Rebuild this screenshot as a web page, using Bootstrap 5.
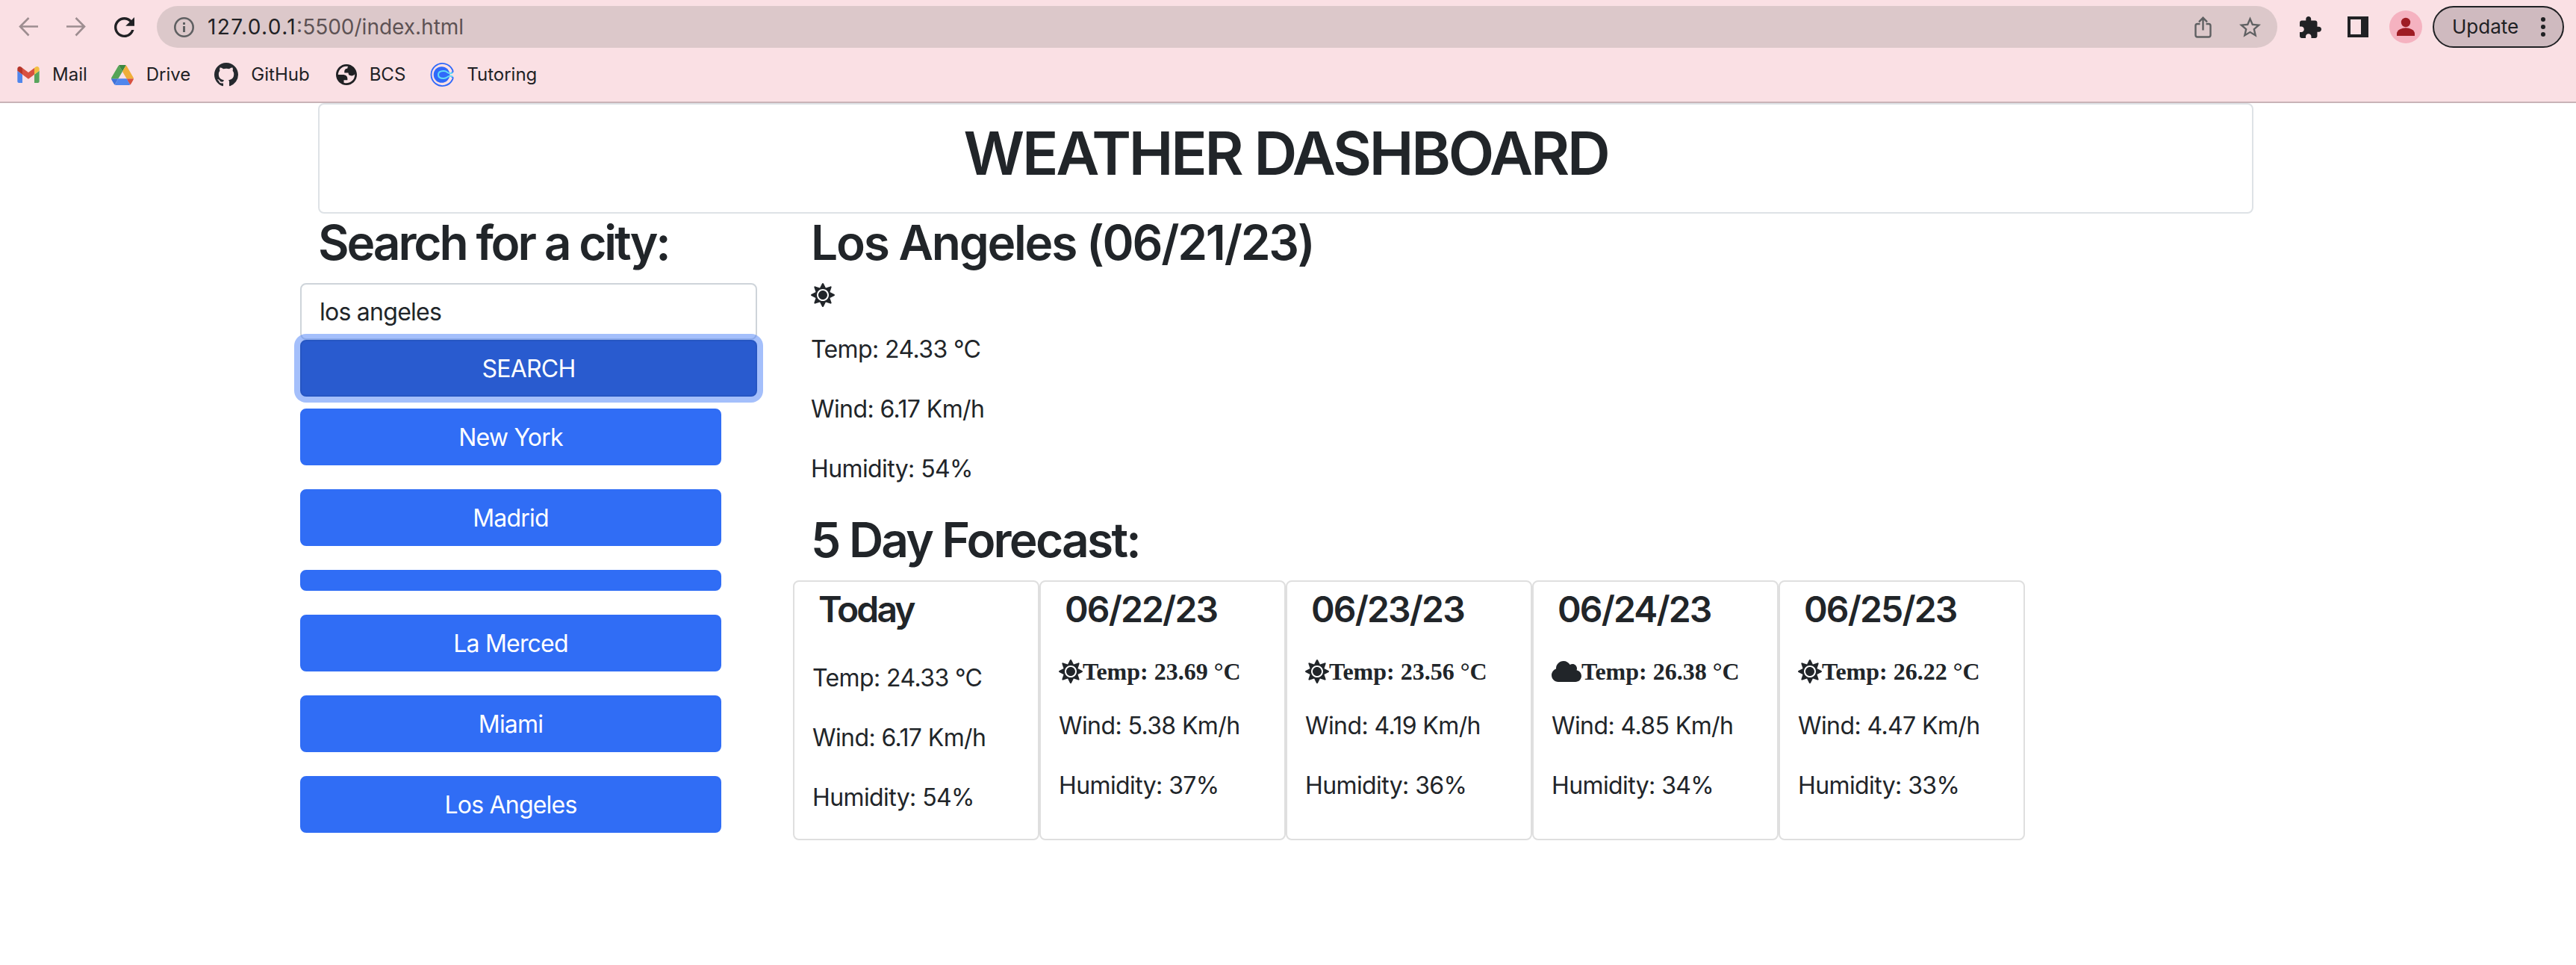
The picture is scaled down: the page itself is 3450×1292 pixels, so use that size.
<!DOCTYPE html>
<html lang="en">
<head>
<meta charset="utf-8">
<meta name="viewport" content="width=device-width, initial-scale=1">
<title>Weather Dashboard</title>
<link href="https://cdn.jsdelivr.net/npm/bootstrap@5.3.0/dist/css/bootstrap.min.css" rel="stylesheet">
<style>
  :root { font-size: 32px; --bs-border-width: 2px; }
  body { font-family: Inter, "Liberation Sans", sans-serif; color: #212529; background: #fff; letter-spacing: -.6px; overflow: hidden; }
  svg { display: block; flex: none; }

  /* browser chrome */
  .chrome { height: 138px; background: #fae0e4; border-bottom: 2px solid #c9b3b7; color: #202124; letter-spacing: 0; }
  .toolbar { height: 72px; padding: 0 16px 0 25px; }
  .nav-arrows { gap: 38px; color: #9d8d90; margin-right: 30px; }
  .nav-arrows .reload { color: #202124; }
  .omnibox { height: 56px; border-radius: 28px; background: #dcc8ca; padding: 0 22px 0 23px; font-size: 28px; line-height: 56px; margin-right: 30px; color: #5f6062; }
  .omnibox .host { color: #202124; letter-spacing: 1.4px; margin-left: 18px; }
  .omnibox .path { color: #5d5254; letter-spacing: 0; }
  .omnibox .share { margin-right: 37px; }
  .ext { margin-right: 35px; }
  .panel { margin-right: 28px; }
  .avatar { margin-right: 14px; }
  .update-pill { width: 176px; height: 56px; border: 2px solid #202124; border-radius: 28px; background: #cfbabf; font-size: 26px; line-height: 52px; padding: 0 23px 0 24px; }
  .bookmarks { height: 56px; padding-left: 23px; font-size: 24px; line-height: 56px; }
  .bookmarks a { color: inherit; text-decoration: none; gap: 17px; }
  .bk-mail, .bk-drive { margin-right: 32px; }
  .bk-git { margin-right: 35px; }
  .bk-bcs { margin-right: 33px; }

  /* dashboard */
  .container.dash { max-width: 2640px; margin-left: 402px; }
  .title-card { height: 148px; border: 2px solid #dee2e6; border-radius: 8px; }
  h1, h2, h4 { font-weight: 560 !important; }
  .title-card h1 { font-size: 80px; letter-spacing: -3.2px; line-height: 98px; }
  h2 { font-size: 64px !important; line-height: 78.800px !important; margin-bottom: 14px !important; white-space: nowrap; }
  .ls-search { letter-spacing: -3.15px; }
  .ls-city { letter-spacing: -2.25px; }
  .ls-forecast { letter-spacing: -2.75px; }
  .search-form { width: 612px; margin-left: -24px; }
  .search-form .form-control { border: 2px solid #ced4da; border-radius: 8px; letter-spacing: -.74px; padding-top: 13px; padding-bottom: 11px; }
  .btn { --bs-btn-border-width: 2px; --bs-btn-border-radius: 8px; --bs-btn-bg: #306df5; --bs-btn-border-color: #306df5; letter-spacing: -.8px; padding-top: 13px; padding-bottom: 11px; }
  .btn.search-btn { background: #295bcf; border-color: #2656c3; box-shadow: 0 0 0 8px rgba(73,127,247,.5); position: relative; }
  .history { width: 564px; margin-left: -24px; }
  .now svg { margin-bottom: 33px; }
  .now p { margin-bottom: 32px; }
  .forecast { margin-left: -24px; }
  .day { width: 330px; height: 348px; border: 2px solid #dfdfdf; border-radius: 8px; padding: 8px 0 0 24px; white-space: nowrap; }
  .day h4 { font-size: 48px; line-height: 1.2; margin: 0 0 39px 8px; letter-spacing: -1.85px; }
  .day h4.today { letter-spacing: -2.9px; margin-bottom: 40px; }
  .day p { margin-bottom: 32px; }
  .day .sky { height: 32px; margin-bottom: 33px; line-height: 34px; font-family: "Liberation Serif", "Times New Roman", serif; font-weight: 700; letter-spacing: 0; }
</style>
</head>
<body>
<svg width="0" height="0" class="position-absolute">
  <symbol id="sun" viewBox="0 0 512 512"><path d="M256 160c-52.900 0-96 43.100-96 96s43.100 96 96 96 96-43.100 96-96-43.100-96-96-96zm246.400 80.500l-94.700-47.300 33.500-100.400c4.500-13.600-8.400-26.500-21.900-21.900l-100.400 33.500-47.400-94.800c-6.400-12.800-24.600-12.800-31 0l-47.300 94.700L92.700 70.800c-13.600-4.500-26.500 8.400-21.900 21.900l33.500 100.400-94.700 47.400c-12.800 6.400-12.800 24.600 0 31l94.700 47.300-33.500 100.500c-4.500 13.600 8.400 26.500 21.900 21.900l100.400-33.500 47.300 94.700c6.400 12.800 24.600 12.800 31 0l47.300-94.700 100.400 33.500c13.600 4.500 26.500-8.400 21.900-21.900l-33.500-100.400 94.700-47.300c13-6.500 13-24.700.2-31.100zm-155.900 106c-49.900 49.900-131.100 49.900-181 0-49.900-49.900-49.900-131.100 0-181 49.900-49.900 131.100-49.900 181 0 49.900 49.900 49.900 131.100 0 181z"/></symbol>
  <symbol id="cloud" viewBox="0 0 640 512"><path d="M537.600 226.600c4.100-10.700 6.400-22.400 6.400-34.600 0-53-43-96-96-96-19.700 0-38.100 6-53.300 16.200C367 64.200 315.300 32 256 32c-88.400 0-160 71.600-160 160 0 2.700.1 5.400.2 8.100C40.200 219.800 0 273.200 0 336c0 79.500 64.500 144 144 144h368c70.700 0 128-57.300 128-128 0-61.900-44-113.600-102.400-125.400z"/></symbol>
</svg>

<header class="chrome">
  <div class="toolbar d-flex align-items-center">
    <div class="nav-arrows d-flex align-items-center">
      <svg width="26" height="26" viewBox="0 0 26 26" fill="none" stroke="currentColor" stroke-width="2.600"><path d="M26 12.500H2M13.500 1 2 12.500 13.500 24.500"/></svg>
      <svg width="26" height="26" viewBox="0 0 26 26" fill="none" stroke="currentColor" stroke-width="2.600"><path d="M0 12.500h24M12.500 1 24 12.500 12.500 24.500"/></svg>
      <svg class="reload" width="27" height="27" viewBox="4 4 16 16" fill="currentColor"><path d="M17.650 6.350C16.200 4.900 14.210 4 12 4c-4.420 0-7.990 3.580-7.990 8s3.570 8 7.990 8c3.730 0 6.840-2.550 7.730-6h-2.080c-.82 2.330-3.040 4-5.650 4-3.310 0-6-2.690-6-6s2.690-6 6-6c1.660 0 3.140.69 4.220 1.780L13 11h7V4l-2.350 2.350z"/></svg>
    </div>
    <div class="omnibox d-flex align-items-center flex-grow-1">
      <svg width="27" height="27" viewBox="0 0 27 27"><circle cx="13.500" cy="13.500" r="12.200" fill="none" stroke="currentColor" stroke-width="2.600"/><path fill="currentColor" d="M12 7h3v3h-3zM12 12h3v8h-3z"/></svg>
      <span class="host">127.0.0.1</span><span class="path">:5500/index.html</span>
      <svg class="share ms-auto" width="23" height="29" viewBox="0 0 23 29" fill="none" stroke="currentColor" stroke-width="2.400"><path d="M7.500 10H4a2.500 2.500 0 0 0-2.500 2.500v12.500A2.500 2.500 0 0 0 4 27.500h15a2.500 2.500 0 0 0 2.500-2.500V12.500A2.500 2.500 0 0 0 19 10h-3.500M11.500 18.500V2M6 7.300l5.500-5.500L17 7.300"/></svg>
      <svg width="29" height="28" viewBox="2 2 20 19" fill="currentColor"><path d="M22 9.240l-7.190-.62L12 2 9.190 8.630 2 9.240l5.460 4.730L5.820 21 12 17.270 18.180 21l-1.630-7.030L22 9.240zM12 15.400l-3.760 2.270 1-4.280-3.320-2.880 4.380-.38L12 6.100l1.710 4.040 4.380.38-3.320 2.880 1 4.280L12 15.400z"/></svg>
    </div>
    <svg class="ext" width="29" height="29" viewBox="2 1 21 21" fill="#202124"><path d="M20.500 11H19V7c0-1.100-.9-2-2-2h-4V3.500C13 2.120 11.880 1 10.500 1S8 2.120 8 3.500V5H4c-1.100 0-1.990.9-1.990 2v3.800H3.500c1.490 0 2.700 1.210 2.700 2.700s-1.210 2.700-2.700 2.700H2V20c0 1.100.9 2 2 2h3.800v-1.500c0-1.490 1.210-2.700 2.700-2.700 1.490 0 2.700 1.210 2.700 2.700V22H17c1.100 0 2-.9 2-2v-4h1.500c1.380 0 2.500-1.120 2.500-2.500S21.880 11 20.500 11z"/></svg>
    <svg class="panel" width="28" height="28" viewBox="0 0 28 28" fill="#202124" fill-rule="evenodd"><path d="M0 0h28v28H0zM4 4v20h14V4z"/></svg>
    <svg class="avatar" width="44" height="44" viewBox="0 0 44 44"><circle cx="22" cy="22" r="22" fill="#f5b2c0"/><g fill="#9e1c24"><circle cx="22" cy="16" r="6.200"/><path d="M10 34v-3.200c0-4.800 7-7.600 12-7.600s12 2.800 12 7.600V34z"/></g></svg>
    <div class="update-pill d-flex align-items-center justify-content-between">
      <span>Update</span>
      <svg width="6" height="26" viewBox="0 0 6 26" fill="#202124"><circle cx="3" cy="3" r="3"/><circle cx="3" cy="13" r="3"/><circle cx="3" cy="23" r="3"/></svg>
    </div>
  </div>
  <nav class="bookmarks d-flex align-items-center">
    <a class="bk-mail d-flex align-items-center"><svg width="30" height="22" viewBox="52 42 88 66"><path fill="#4f86ec" d="M58 108h14V74L52 59v43c0 3.320 2.690 6 6 6"/><path fill="#58a55c" d="M120 108h14c3.320 0 6-2.690 6-6V59l-20 15"/><path fill="#f2bf42" d="M120 48v26l20-15v-8c0-7.420-8.470-11.650-14.400-7.200"/><path fill="#d85140" d="M72 74V48l24 18 24-18v26L96 92"/><path fill="#b5352a" d="M52 51v8l20 15V48l-5.600-4.200c-5.940-4.450-14.400-.22-14.400 7.200"/></svg>Mail</a>
    <a class="bk-drive d-flex align-items-center"><svg width="30" height="27" viewBox="0 0 87.300 78"><path fill="#3f73d8" d="m6.600 66.850 3.850 6.650c.8 1.400 1.950 2.500 3.300 3.300l13.750-23.800h-27.500c0 1.550.4 3.100 1.200 4.500z"/><path fill="#55a457" d="m43.650 25-13.750-23.800c-1.350.8-2.500 1.900-3.300 3.300l-25.400 44a9.060 9.060 0 0 0-1.200 4.500h27.500z"/><path fill="#d85140" d="m73.550 76.800c1.350-.8 2.500-1.900 3.300-3.300l1.600-2.750 7.650-13.250c.8-1.400 1.200-2.950 1.200-4.500h-27.502l5.852 11.500z"/><path fill="#3c8741" d="m43.650 25 13.750-23.800c-1.350-.8-2.900-1.200-4.500-1.200h-18.500c-1.600 0-3.150.45-4.500 1.200z"/><path fill="#4f86ec" d="m59.800 53h-32.300l-13.750 23.800c1.350.8 2.900 1.200 4.500 1.200h50.800c1.600 0 3.150-.45 4.500-1.200z"/><path fill="#f0ae38" d="m73.400 26.500-12.700-22c-.8-1.400-1.950-2.500-3.300-3.300l-13.750 23.800 16.150 28h27.450c0-1.550-.4-3.100-1.200-4.500z"/></svg>Drive</a>
    <a class="bk-git d-flex align-items-center"><svg width="32" height="32" viewBox="0 0 16 16" fill="#25292e"><path d="M8 0C3.580 0 0 3.580 0 8c0 3.540 2.290 6.530 5.470 7.590.4.07.55-.17.55-.38 0-.19-.01-.82-.01-1.490-2.010.37-2.530-.49-2.690-.94-.09-.23-.48-.94-.82-1.130-.28-.15-.68-.52-.01-.53.63-.01 1.080.58 1.230.82.72 1.210 1.870.87 2.330.66.07-.52.28-.87.51-1.070-1.780-.2-3.640-.89-3.640-3.950 0-.87.31-1.590.82-2.150-.08-.2-.36-1.020.08-2.120 0 0 .67-.21 2.200.82.64-.18 1.320-.27 2-.27s1.360.09 2 .27c1.530-1.040 2.200-.82 2.200-.82.44 1.100.16 1.920.08 2.120.51.56.82 1.270.82 2.150 0 3.070-1.870 3.750-3.650 3.950.29.25.54.73.54 1.480 0 1.070-.01 1.930-.01 2.200 0 .21.15.46.55.38A8.010 8.010 0 0 0 16 8c0-4.420-3.580-8-8-8"/></svg>GitHub</a>
    <a class="bk-bcs d-flex align-items-center"><svg width="28" height="28" viewBox="2 2 20 20" fill="#202124"><path fill-rule="evenodd" d="M12 2C6.480 2 2 6.480 2 12s4.480 10 10 10 10-4.480 10-10S17.520 2 12 2zM4 12h4.400c3.407.022 4.922 1.730 4.543 5.127H9.488v2.470a8.004 8.004 0 0 0 10.498-8.083C19.327 12.504 18.332 13 17 13c-2.137 0-3.206-.916-3.206-2.750h-3.748c-.274-2.728.683-4.092 2.870-4.092 0-.975.327-1.597.811-1.970A8.004 8.004 0 0 0 4 12z"/></svg>BCS</a>
    <a class="bk-tut d-flex align-items-center"><svg width="32" height="32" viewBox="0 0 32 32" fill="none"><circle cx="15.500" cy="16" r="10.800" fill="#3069fa"/><path stroke="#fae0e4" stroke-width="6" d="M32 16h-4.500"/><path stroke="#3069fa" stroke-width="1.800" stroke-linejoin="round" d="M30 9.500A15 15 0 1 0 30 22.500C31.200 20 30.500 18.800 28.500 19.200M30 9.500C31.200 12 30.500 13.200 28.500 12.800"/><path stroke="#62dcf5" stroke-width="2" stroke-linecap="round" d="M29.500 13.700c-2.500 1-4.500.8-6.500-1-1.200-1-2.500-1.700-5-1.700-4.500 0-7 2-7 5s2.500 5 7 5c2.500 0 3.800-.7 5-1.700 2-1.800 4-2 6.500-1"/></svg>Tutoring</a>
  </nav>
</header>

<main class="container dash">
  <div class="title-card text-center pt-2">
    <h1 class="mb-0">WEATHER DASHBOARD</h1>
  </div>
  <div class="row">
    <aside class="col-3">
      <h2 class="ls-search">Search for a city:</h2>
      <form class="search-form">
        <input type="text" class="form-control" value="los angeles" aria-label="City">
        <button type="button" class="btn btn-primary search-btn w-100">SEARCH</button>
      </form>
      <div class="history d-flex flex-column pt-2 gap-3">
        <button type="button" class="btn btn-primary">New York</button>
        <button type="button" class="btn btn-primary">Madrid</button>
        <button type="button" class="btn btn-primary" aria-label="Empty entry"></button>
        <button type="button" class="btn btn-primary">La Merced</button>
        <button type="button" class="btn btn-primary">Miami</button>
        <button type="button" class="btn btn-primary">Los Angeles</button>
      </div>
    </aside>
    <section class="col-9">
      <div class="now">
        <h2 class="ls-city">Los Angeles (06/21/23)</h2>
        <svg width="32" height="32" fill="#212529"><use href="#sun"/></svg>
        <p>Temp: 24.33 °C</p>
        <p>Wind: 6.17 Km/h</p>
        <p>Humidity: 54%</p>
      </div>
      <h2 class="ls-forecast">5 Day Forecast:</h2>
      <div class="forecast d-flex">
        <div class="day">
          <h4 class="today">Today</h4>
          <p>Temp: 24.33 °C</p>
          <p>Wind: 6.17 Km/h</p>
          <p>Humidity: 54%</p>
        </div>
        <div class="day">
          <h4>06/22/23</h4>
          <div class="sky d-flex align-items-center"><svg width="32" height="32" fill="#212529"><use href="#sun"/></svg><span>Temp: 23.69 °C</span></div>
          <p>Wind: 5.38 Km/h</p>
          <p>Humidity: 37%</p>
        </div>
        <div class="day">
          <h4>06/23/23</h4>
          <div class="sky d-flex align-items-center"><svg width="32" height="32" fill="#212529"><use href="#sun"/></svg><span>Temp: 23.56 °C</span></div>
          <p>Wind: 4.19 Km/h</p>
          <p>Humidity: 36%</p>
        </div>
        <div class="day">
          <h4>06/24/23</h4>
          <div class="sky d-flex align-items-center"><svg width="40" height="32" fill="#212529"><use href="#cloud"/></svg><span>Temp: 26.38 °C</span></div>
          <p>Wind: 4.85 Km/h</p>
          <p>Humidity: 34%</p>
        </div>
        <div class="day">
          <h4>06/25/23</h4>
          <div class="sky d-flex align-items-center"><svg width="32" height="32" fill="#212529"><use href="#sun"/></svg><span>Temp: 26.22 °C</span></div>
          <p>Wind: 4.47 Km/h</p>
          <p>Humidity: 33%</p>
        </div>
      </div>
    </section>
  </div>
</main>
<script src="https://cdn.jsdelivr.net/npm/bootstrap@5.3.0/dist/js/bootstrap.bundle.min.js"></script>
</body>
</html>
